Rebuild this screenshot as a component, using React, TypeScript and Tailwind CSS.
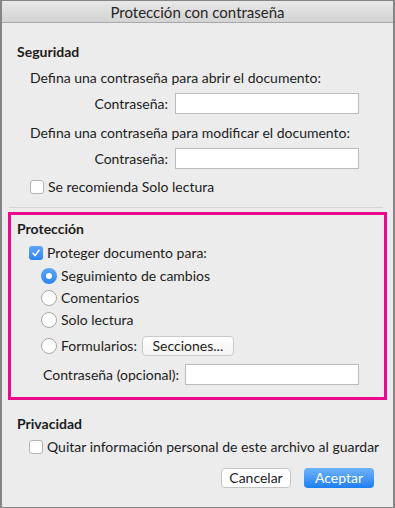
import React from "react";

const font = { fontFamily: 'Lato, "Open Sans", sans-serif' };

function Checkbox({ checked = false }: { checked?: boolean }) {
  if (checked) {
    return (
      <div className="w-[14px] h-[14px] rounded-[3px] bg-gradient-to-b from-[#5aa6f8] to-[#2d84f0] flex items-center justify-center shrink-0">
        <svg width="10" height="10" viewBox="0 0 10 10">
          <path d="M2 5.3 L4.1 7.6 L8 2.2" fill="none" stroke="white" strokeWidth="1.5" strokeLinecap="round" strokeLinejoin="round" />
        </svg>
      </div>
    );
  }
  return <div className="w-[14px] h-[14px] rounded-[3px] bg-white border border-[#b5b5b5] shrink-0" />;
}

function Radio({ checked = false }: { checked?: boolean }) {
  if (checked) {
    return (
      <div className="w-[16px] h-[16px] rounded-full bg-gradient-to-b from-[#5aa6f8] to-[#2d84f0] flex items-center justify-center shrink-0">
        <div className="w-[6px] h-[6px] rounded-full bg-white" />
      </div>
    );
  }
  return <div className="w-[16px] h-[16px] rounded-full bg-white border border-[#a9a9a9] shrink-0" />;
}

function Input({ w }: { w: string }) {
  return <div className={`${w} h-[21px] bg-white border border-[#bcbcbc] shrink-0`} />;
}

export default function App() {
  return (
    <div
      style={font}
      className="w-[395px] h-[508px] border-x-2 border-y border-[#858585] bg-[#ececec] flex flex-col text-[14px] leading-[16px] text-[#1c1c1c] overflow-hidden"
    >
      <div className="h-[22px] shrink-0 border-b border-[#a9a9a9] bg-gradient-to-b from-[#e9e8e9] to-[#d4d3d4] flex items-center justify-center text-[#262626] text-[15px]">
        Protección con contraseña
      </div>

      <div className="mt-[21px] ml-[15px] h-[16px] font-bold">Seguridad</div>
      <div className="mt-[10px] ml-[28px] h-[16px]">Defina una contraseña para abrir el documento:</div>
      <div className="mt-[7px] flex items-center h-[21px]">
        <div className="w-[166px] text-right">Contraseña:</div>
        <div className="ml-[7px]"><Input w="w-[184px]" /></div>
      </div>
      <div className="mt-[11px] ml-[28px] h-[16px]">Defina una contraseña para modificar el documento:</div>
      <div className="mt-[7px] flex items-center h-[21px]">
        <div className="w-[166px] text-right">Contraseña:</div>
        <div className="ml-[7px]"><Input w="w-[184px]" /></div>
      </div>
      <div className="mt-[10px] ml-[28px] h-[16px] flex items-center gap-[4px]">
        <Checkbox />
        <span>Se recomienda Solo lectura</span>
      </div>
      <div className="mt-[12px] ml-[7px] w-[374px] h-[1px] bg-[#d5d5d5]" />

      <div className="mt-[4px] ml-[6px] w-[379px] h-[188px] border-[3px] border-[#ec0a8c] flex flex-col shrink-0">
        <div className="mt-[6px] ml-[6px] h-[16px] font-bold">Protección</div>
        <div className="mt-[8px] ml-[18px] h-[16px] flex items-center gap-[4px]">
          <Checkbox checked />
          <span>Proteger documento para:</span>
        </div>
        <div className="mt-[7px] ml-[30px] h-[16px] flex items-center gap-[4px]">
          <Radio checked />
          <span>Seguimiento de cambios</span>
        </div>
        <div className="mt-[6px] ml-[30px] h-[16px] flex items-center gap-[4px]">
          <Radio />
          <span>Comentarios</span>
        </div>
        <div className="mt-[6px] ml-[30px] h-[16px] flex items-center gap-[4px]">
          <Radio />
          <span>Solo lectura</span>
        </div>
        <div className="mt-[8px] ml-[30px] h-[20px] flex items-center">
          <Radio />
          <span className="ml-[4px]">Formularios:</span>
          <div className="ml-[5px] w-[92px] h-[20px] rounded-[4px] bg-gradient-to-b from-[#ffffff] to-[#f3f3f3] border border-[#cacaca] flex items-center justify-center">
            Secciones...
          </div>
        </div>
        <div className="mt-[8px] ml-[32px] h-[21px] flex items-center">
          <div className="w-[142px]">Contraseña (opcional):</div>
          <Input w="w-[174px]" />
        </div>
      </div>

      <div className="mt-[16px] ml-[15px] h-[16px] font-bold">Privacidad</div>
      <div className="mt-[7px] ml-[27px] h-[16px] flex items-center gap-[4px]">
        <Checkbox />
        <span>Quitar información personal de este archivo al guardar</span>
      </div>
      <div className="mt-[13px] mr-[19px] flex justify-end gap-[13px]">
        <div className="w-[70px] h-[20px] rounded-[4px] bg-white border border-[#c3c3c3] flex items-center justify-center">
          Cancelar
        </div>
        <div className="w-[70px] h-[20px] rounded-[4px] bg-gradient-to-b from-[#6db3fa] to-[#1a7ef0] text-white flex items-center justify-center">
          Aceptar
        </div>
      </div>
    </div>
  );
}
